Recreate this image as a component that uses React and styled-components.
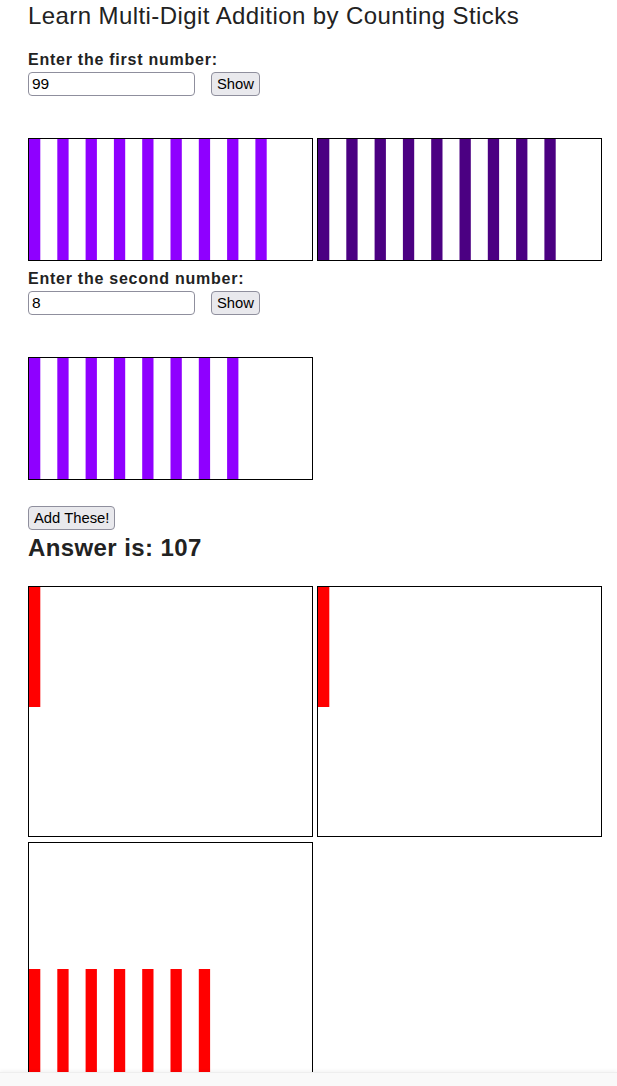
import React from "react";
import styled, { createGlobalStyle } from "styled-components";

const GlobalStyle = createGlobalStyle`
  html, body {
    margin: 0;
    padding: 0;
    background: #fff;
  }
  body {
    font-family: "Liberation Sans", Arial, sans-serif;
    color: #222;
  }
`;

const Page = styled.main`
  display: flex;
  flex-direction: column;
  align-items: flex-start;
  padding: 1.5px 0 0 28px;
`;

const Title = styled.h1`
  margin: 0;
  font-size: 24px;
  line-height: 27px;
  font-weight: 400;
  letter-spacing: 0.42px;
  color: #222;
`;

const Section = styled.section`
  display: flex;
  flex-direction: column;
  align-items: flex-start;
  gap: 3px;
  margin-top: ${(p) => p.$top}px;
`;

const Label = styled.label`
  display: block;
  font-size: 16px;
  line-height: 18px;
  font-weight: 700;
  letter-spacing: 0.75px;
  color: #222;
`;

const InputRow = styled.div`
  display: flex;
  align-items: center;
  gap: 16px;
`;

const NumberInput = styled.input`
  box-sizing: border-box;
  width: 167px;
  height: 24px;
  padding: 0 3px;
  border: 1px solid #8f8f9d;
  border-radius: 4px;
  font-family: "Liberation Sans", Arial, sans-serif;
  font-size: 15.5px;
  color: #000;
  background: #fff;
  outline: none;
`;

const Button = styled.button`
  box-sizing: border-box;
  height: 24px;
  padding: 0 5px;
  border: 1px solid #8f8f9d;
  border-radius: 4px;
  background: #e9e9ed;
  color: #000;
  font-family: "Liberation Sans", Arial, sans-serif;
  font-size: 14.8px;
  line-height: 22px;
  cursor: pointer;
  margin-top: ${(p) => p.$top || 0}px;
`;

const StickGrid = styled.div`
  display: grid;
  grid-template-columns: 285px 285px;
  column-gap: 4px;
  row-gap: 5px;
  margin-top: ${(p) => p.$top}px;
`;

const StickBox = styled.div`
  box-sizing: border-box;
  width: 285px;
  height: ${(p) => p.$height + 2}px;
  border: 1px solid #000;
  background: #fff;
  overflow: hidden;
`;

const StickSvg = styled.svg`
  display: block;
`;

const Answer = styled.h2`
  margin: 4.5px 0 0;
  font-size: 24px;
  line-height: 27px;
  font-weight: 700;
  letter-spacing: 0.4px;
  color: #222;
`;

const BottomBar = styled.div`
  position: fixed;
  left: 0;
  right: 0;
  bottom: 0;
  height: 13px;
  background: #f9f9f9;
  border-top: 1px solid #eeeeee;
  box-shadow: 0 -2px 3px rgba(0, 0, 0, 0.04);
`;

const INNER_W = 283;
const STEP = 28.3;
const STICK_W = 11.3;

function Sticks({ count, color, height, top = 0, stickHeight }) {
  const sh = stickHeight ?? height - top;
  return (
    <StickBox $height={height}>
      <StickSvg width={INNER_W} height={height} viewBox={`0 0 ${INNER_W} ${height}`}>
        {Array.from({ length: count }, (_, i) => (
          <rect key={i} x={i * STEP} y={top} width={STICK_W} height={sh} fill={color} />
        ))}
      </StickSvg>
    </StickBox>
  );
}

const VIOLET = "#8f00ff";
const INDIGO = "#4b0082";
const RED = "#ff0000";

export default function App() {
  return (
    <>
      <GlobalStyle />
      <Page>
        <Title>Learn Multi-Digit Addition by Counting Sticks</Title>

        <Section $top={22}>
          <Label htmlFor="first">Enter the first number:</Label>
          <InputRow>
            <NumberInput id="first" type="text" defaultValue="99" />
            <Button>Show</Button>
          </InputRow>
        </Section>

        <StickGrid $top={42}>
          <Sticks count={9} color={VIOLET} height={121} />
          <Sticks count={9} color={INDIGO} height={121} />
        </StickGrid>

        <Section $top={9.5}>
          <Label htmlFor="second">Enter the second number:</Label>
          <InputRow>
            <NumberInput id="second" type="text" defaultValue="8" />
            <Button>Show</Button>
          </InputRow>
        </Section>

        <StickGrid $top={42}>
          <Sticks count={8} color={VIOLET} height={121} />
        </StickGrid>

        <Button $top={25.5}>Add These!</Button>
        <Answer>Answer is: 107</Answer>

        <StickGrid $top={24.5}>
          <Sticks count={1} color={RED} height={249} stickHeight={120} />
          <Sticks count={1} color={RED} height={249} stickHeight={120} />
          <Sticks count={7} color={RED} height={249} top={126} />
        </StickGrid>
      </Page>
      <BottomBar />
    </>
  );
}
